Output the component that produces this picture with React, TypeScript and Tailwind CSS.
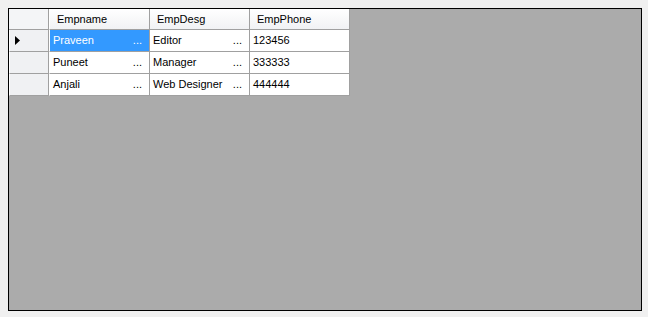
import React from 'react';

interface Employee {
  name: string;
  desg: string;
  phone: string;
}

const rows: Employee[] = [
  { name: 'Praveen', desg: 'Editor', phone: '123456' },
  { name: 'Puneet', desg: 'Manager', phone: '333333' },
  { name: 'Anjali', desg: 'Web Designer', phone: '444444' }
];

const font = { fontFamily: '"Liberation Sans", Arial, sans-serif' };

const HeaderCell: React.FC<{ label?: string; first?: boolean }> = ({ label, first }) => (
  <div
    className={`h-[21px] border-r border-b border-[#a0a0a0] bg-gradient-to-b from-[#ffffff] to-[#f1f2f4] text-[11px] leading-[20px] text-black ${
      first ? 'w-[101px] border-l border-l-white pl-[7px]' : 'w-[100px] pl-[7px]'
    }`}
  >
    {label}
  </div>
);

const Cell: React.FC<{ text: string; selected?: boolean; clipped?: boolean; first?: boolean }> = ({
  text,
  selected,
  clipped,
  first
}) => (
  <div
    className={`flex h-[22px] items-center justify-between border-r border-b border-[#a0a0a0] pl-[3px] pr-[7px] text-[11px] ${
      first ? 'w-[101px] border-l border-l-white' : 'w-[100px]'
    } ${selected ? 'bg-[#3399ff] text-white' : 'bg-white text-black'}`}
  >
    <span>{text}</span>
    {clipped && <span>...</span>}
  </div>
);

const App: React.FC = () => {
  return (
    <div className="h-[317px] w-[648px] bg-[#f0f0f0] p-2" style={font}>
      <div className="h-[303px] w-[634px] border border-black bg-[#ababab]">
        <div className="flex flex-col">
          {/* Header */}
          <div className="flex">
            <div className="h-[21px] w-[40px] border-r border-b border-[#a0a0a0] bg-[#f4f5f7]" />
            <HeaderCell label="Empname" first />
            <HeaderCell label="EmpDesg" />
            <HeaderCell label="EmpPhone" />
          </div>

          {/* Rows */}
          {rows.map((r, i) => (
            <div key={r.name} className="flex">
              <div className="flex h-[22px] w-[40px] items-center border-r border-b border-[#a0a0a0] border-l border-l-white bg-[#f0f1f3] pl-[5px]">
                {i === 0 && (
                  <svg width="5" height="9" viewBox="0 0 5 9">
                    <path d="M0 0 L5 4.5 L0 9 Z" fill="#000" />
                  </svg>
                )}
              </div>
              <Cell text={r.name} selected={i === 0} clipped first />
              <Cell text={r.desg} clipped />
              <Cell text={r.phone} />
            </div>
          ))}
        </div>
      </div>
    </div>
  );
};

export default App;
